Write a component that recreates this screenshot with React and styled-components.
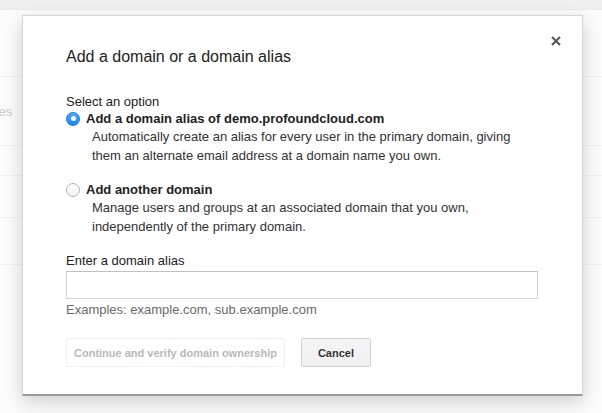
import React, { useState } from 'react';
import styled, { createGlobalStyle } from 'styled-components';

const GlobalStyle = createGlobalStyle`
  html, body {
    margin: 0;
    padding: 0;
    background: #fff;
    font-family: "Liberation Sans", Arial, Helvetica, sans-serif;
    color: #222;
  }
`;

/* page behind the dialog */
const Page = styled.div`
  position: relative;
  width: 602px;
  height: 413px;
  overflow: hidden;
  background: #fcfcfc;
`;

const TopBand = styled.div`
  height: 9px;
  background: #f0f0f0;
  border-bottom: 1px solid #ececec;
`;

const Row = styled.div`
  height: ${p => p.h}px;
  border-bottom: 1px solid #f0f0f0;
  box-sizing: border-box;
  display: flex;
  align-items: center;
  font-size: 13px;
  color: #c8c8c8;
  margin-left: -8px;
`;

const Dialog = styled.div`
  position: absolute;
  left: 22px;
  top: 15px;
  width: 561px;
  height: 381px;
  box-sizing: border-box;
  background: #fff;
  border: 1px solid #d6d6d6;
  border-bottom: 2px solid #9a9a9a;
  box-shadow: 0 6px 18px rgba(0, 0, 0, 0.18);
  padding: 31px 44px 0 43px;
`;

const Close = styled.button`
  position: absolute;
  top: 17px;
  right: 18px;
  width: 16px;
  height: 16px;
  padding: 0;
  border: 0;
  background: none;
  cursor: pointer;
  display: flex;
  align-items: center;
  justify-content: center;
`;

const Title = styled.h2`
  margin: 0;
  font-size: 16px;
  line-height: 20px;
  font-weight: normal;
  color: #222;
`;

const Label = styled.div`
  font-size: 13px;
  line-height: 17px;
  color: #222;
  margin-top: ${p => p.mt || 0}px;
`;

const Option = styled.label`
  display: block;
  margin-top: ${p => p.mt || 0}px;
  cursor: pointer;
`;

const OptionHead = styled.div`
  display: flex;
  align-items: center;
  gap: 6px;
  font-size: 13px;
  line-height: 17px;
  font-weight: bold;
  color: #222;
`;

const Radio = styled.span`
  width: 14px;
  height: 14px;
  box-sizing: border-box;
  border-radius: 50%;
  flex: none;
  display: flex;
  align-items: center;
  justify-content: center;
  background: ${p => (p.checked ? 'linear-gradient(#4fa8fc, #1a84f6)' : 'linear-gradient(#fff, #f2f2f2)')};
  border: 1px solid ${p => (p.checked ? '#1b7fe8' : '#b4b4b4')};

  &::after {
    content: '';
    display: ${p => (p.checked ? 'block' : 'none')};
    width: 5px;
    height: 5px;
    border-radius: 50%;
    background: #fff;
  }
`;

const Desc = styled.div`
  padding-left: 26px;
  font-size: 13px;
  line-height: 19px;
  color: #333;
`;

const Input = styled.input`
  display: block;
  width: 472px;
  height: 28px;
  box-sizing: border-box;
  margin-top: 2px;
  border: 1px solid #d5d5d5;
  border-top-color: #c0c0c0;
  font-size: 13px;
  padding: 0 6px;
  outline: none;
  font-family: inherit;
`;

const Hint = styled.div`
  margin-top: 2px;
  font-size: 13px;
  line-height: 17px;
  color: #6a6a6a;
`;

const Actions = styled.div`
  display: flex;
  gap: 16px;
  margin-top: 20px;
`;

const Button = styled.button`
  height: 29px;
  box-sizing: border-box;
  padding: 0 ${p => p.px}px;
  border-radius: 2px;
  font-family: inherit;
  font-size: 11px;
  font-weight: bold;
  cursor: ${p => (p.disabled ? 'default' : 'pointer')};
  color: ${p => (p.disabled ? '#b8b8b8' : '#333')};
  background: ${p => (p.disabled ? '#fff' : 'linear-gradient(#f5f5f5, #f0f0f0)')};
  border: 1px solid ${p => (p.disabled ? '#efefef' : '#d0d0d0')};
`;

const bgRows = [
  { h: 67, text: '' },
  { h: 69, text: 'ses' },
  { h: 30, text: '' },
  { h: 42, text: '' },
  { h: 47, text: '' }
];

export default function App() {
  const [choice, setChoice] = useState('alias');
  const [alias, setAlias] = useState('');

  return (
    <>
      <GlobalStyle />
      <Page>
        <TopBand />
        {bgRows.map((r, i) => (
          <Row key={i} h={r.h}>
            {r.text}
          </Row>
        ))}

        <Dialog>
          <Close aria-label="Close">
            <svg width="10" height="10" viewBox="0 0 10 10">
              <path d="M1 1L9 9M9 1L1 9" stroke="#555" strokeWidth="2" />
            </svg>
          </Close>

          <Title>Add a domain or a domain alias</Title>

          <Label mt={26}>Select an option</Label>

          <Option onClick={() => setChoice('alias')}>
            <OptionHead>
              <Radio checked={choice === 'alias'} />
              Add a domain alias of demo.profoundcloud.com
            </OptionHead>
            <Desc>
              Automatically create an alias for every user in the primary domain, giving
              <br />
              them an alternate email address at a domain name you own.
            </Desc>
          </Option>

          <Option mt={16} onClick={() => setChoice('domain')}>
            <OptionHead>
              <Radio checked={choice === 'domain'} />
              Add another domain
            </OptionHead>
            <Desc>
              Manage users and groups at an associated domain that you own,
              <br />
              independently of the primary domain.
            </Desc>
          </Option>

          <Label mt={16}>Enter a domain alias</Label>
          <Input value={alias} onChange={e => setAlias(e.target.value)} />
          <Hint>Examples: example.com, sub.example.com</Hint>

          <Actions>
            <Button px={7} disabled={!alias}>
              Continue and verify domain ownership
            </Button>
            <Button px={16}>Cancel</Button>
          </Actions>
        </Dialog>
      </Page>
    </>
  );
}
